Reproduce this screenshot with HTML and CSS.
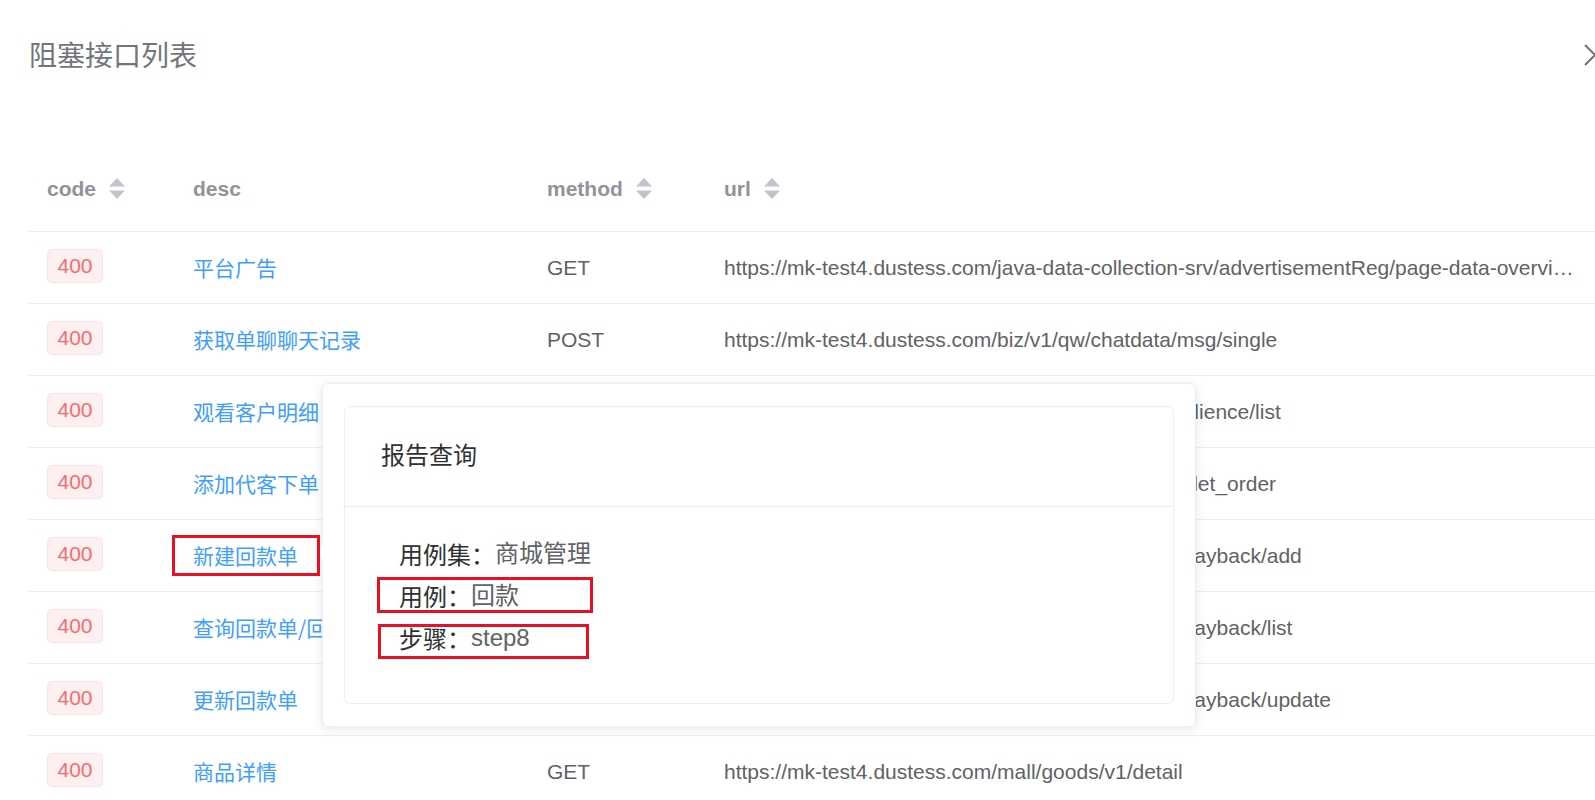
FILE: index.html
```html
<!DOCTYPE html>
<html lang="zh-CN">
<head>
<meta charset="utf-8">
<title>阻塞接口列表</title>
<link rel="stylesheet" href="styles.css">
</head>
<body>
<div class="drawer">
  <div class="drawer-header">
    <span class="drawer-title">阻塞接口列表</span>
    <span class="close-icon"><svg width="22" height="22" viewBox="0 0 22 22"><path d="M1 1 L21 21 M21 1 L1 21" stroke="#72767b" stroke-width="2" fill="none"/></svg></span>
  </div>
  <div class="table">
    <div class="row head">
      <div class="cell">code<svg class="sort" width="18" height="21" viewBox="0 0 18 21"><polygon points="9,0 17,8.5 1,8.5" fill="#c0c4cc"/><polygon points="1,12.5 17,12.5 9,21" fill="#c0c4cc"/></svg></div>
      <div class="cell">desc</div>
      <div class="cell">method<svg class="sort" width="18" height="21" viewBox="0 0 18 21"><polygon points="9,0 17,8.5 1,8.5" fill="#c0c4cc"/><polygon points="1,12.5 17,12.5 9,21" fill="#c0c4cc"/></svg></div>
      <div class="cell">url<svg class="sort" width="18" height="21" viewBox="0 0 18 21"><polygon points="9,0 17,8.5 1,8.5" fill="#c0c4cc"/><polygon points="1,12.5 17,12.5 9,21" fill="#c0c4cc"/></svg></div>
    </div>
    <div class="row">
      <div class="cell"><span class="tag">400</span></div>
      <div class="cell"><a class="link">平台广告</a></div>
      <div class="cell">GET</div>
      <div class="cell url">https://mk-test4.dustess.com/java-data-collection-srv/advertisementReg/page-data-overview</div>
    </div>
    <div class="row">
      <div class="cell"><span class="tag">400</span></div>
      <div class="cell"><a class="link">获取单聊聊天记录</a></div>
      <div class="cell">POST</div>
      <div class="cell url">https://mk-test4.dustess.com/biz/v1/qw/chatdata/msg/single</div>
    </div>
    <div class="row">
      <div class="cell"><span class="tag">400</span></div>
      <div class="cell"><a class="link">观看客户明细</a></div>
      <div class="cell">GET</div>
      <div class="cell url">https://mk-test4.dustess.com/biz/v1/live/course/audience/list</div>
    </div>
    <div class="row">
      <div class="cell"><span class="tag">400</span></div>
      <div class="cell"><a class="link">添加代客下单</a></div>
      <div class="cell">POST</div>
      <div class="cell url">https://mk-test4.dustess.com/mall/v1/order/add_valet_order</div>
    </div>
    <div class="row">
      <div class="cell"><span class="tag">400</span></div>
      <div class="cell"><a class="link">新建回款单</a></div>
      <div class="cell">POST</div>
      <div class="cell url">https://mk-test4.dustess.com/mall/v1/finance/pay/payback/add</div>
    </div>
    <div class="row">
      <div class="cell"><span class="tag">400</span></div>
      <div class="cell"><a class="link">查询回款单/回款计划</a></div>
      <div class="cell">POST</div>
      <div class="cell url">https://mk-test4.dustess.com/mall/v1/finance/pay/payback/list</div>
    </div>
    <div class="row">
      <div class="cell"><span class="tag">400</span></div>
      <div class="cell"><a class="link">更新回款单</a></div>
      <div class="cell">POST</div>
      <div class="cell url">https://mk-test4.dustess.com/mall/v1/finance/pay/payback/update</div>
    </div>
    <div class="row">
      <div class="cell"><span class="tag">400</span></div>
      <div class="cell"><a class="link">商品详情</a></div>
      <div class="cell">GET</div>
      <div class="cell url">https://mk-test4.dustess.com/mall/goods/v1/detail</div>
    </div>
  </div>
</div>

<div class="popover">
  <div class="card">
    <div class="card-header">报告查询</div>
    <div class="card-body">
      <div class="line"><span class="label">用例集：</span><span class="value">商城管理</span></div>
      <div class="line"><span class="label">用例：</span><span class="value">回款</span></div>
      <div class="line"><span class="label">步骤：</span><span class="value">step8</span></div>
    </div>
  </div>
</div>

<div class="mark mark-desc"></div>
<div class="mark mark-case"></div>
<div class="mark mark-step"></div>
</body>
</html>
```

FILE: styles.css
```css
html, body {
  margin: 0;
  padding: 0;
  background: #fff;
}

body {
  font-family: "Liberation Sans", Arial, "Noto Sans CJK SC", sans-serif;
  font-size: 21px;
  color: #606266;
  overflow: hidden;
}

.drawer {
  padding-left: 29px;
  overflow: hidden;
  height: 800px;
  box-sizing: border-box;
}

.drawer-header {
  height: 108px;
  display: flex;
  align-items: center;
  justify-content: space-between;
}

.drawer-title {
  font-size: 28px;
  line-height: 36px;
  color: #72767b;
  font-family: "Noto Sans CJK SC", sans-serif;
}

.close-icon {
  display: flex;
  margin-right: -11px;
  margin-top: 2px;
}

.table {
  margin-top: 38px;
}

.row {
  display: grid;
  grid-template-columns: 146px 354px 177px minmax(0, 1fr);
  height: 72px;
  box-sizing: border-box;
  border-bottom: 1px solid #ebeef5;
  align-items: center;
}

.row.head {
  height: 86px;
  font-weight: bold;
  color: #909399;
}

.cell {
  padding: 0 21px 0 18px;
  display: flex;
  align-items: center;
  min-width: 0;
  white-space: nowrap;
}

.sort {
  margin-left: 12px;
  flex: none;
}

.url {
  display: block;
  overflow: hidden;
  text-overflow: ellipsis;
}

.tag {
  display: inline-block;
  height: 34px;
  line-height: 32px;
  box-sizing: border-box;
  padding: 0 9.5px;
  border: 1px solid #fde2e2;
  background: #fef0f0;
  color: #f56c6c;
  border-radius: 5px;
  font-size: 21px;
  margin-top: -3px;
}

.link {
  color: #409eff;
  font-family: "Noto Sans CJK SC", sans-serif;
  margin-top: -2px;
}

.popover {
  position: absolute;
  left: 322px;
  top: 383px;
  width: 874px;
  height: 344px;
  box-sizing: border-box;
  padding: 22px 21px;
  background: #fff;
  border: 1px solid #ebeef5;
  border-radius: 6px;
  box-shadow: 0 2px 12px 0 rgba(0, 0, 0, 0.1);
}

.popover::before {
  content: "";
  position: absolute;
  left: -6px;
  top: 164px;
  width: 10px;
  height: 10px;
  background: #fff;
  border-left: 1px solid #ebeef5;
  border-bottom: 1px solid #ebeef5;
  transform: rotate(45deg);
}

.card {
  height: 100%;
  box-sizing: border-box;
  border: 1px solid #ebeef5;
  border-radius: 6px;
  background: #fff;
  display: flex;
  flex-direction: column;
}

.card-header {
  height: 100px;
  box-sizing: border-box;
  border-bottom: 1px solid #ebeef5;
  padding: 0 0 6px 36px;
  display: flex;
  align-items: center;
  font-size: 24px;
  color: #303133;
  font-family: "Noto Sans CJK SC", sans-serif;
}

.card-body {
  padding: 26px 0 0 54px;
  font-size: 24px;
  line-height: 42px;
}

.line {
  display: flex;
}

.label {
  color: #303133;
  font-family: "Noto Sans CJK SC", sans-serif;
}

.value {
  color: #606266;
}

.mark {
  position: absolute;
  border: 3px solid #e81123;
  box-sizing: border-box;
}

.mark-desc {
  left: 172px;
  top: 535px;
  width: 148px;
  height: 41px;
}

.mark-case {
  left: 377px;
  top: 577px;
  width: 216px;
  height: 36px;
}

.mark-step {
  left: 378px;
  top: 624px;
  width: 211px;
  height: 35px;
}
```
